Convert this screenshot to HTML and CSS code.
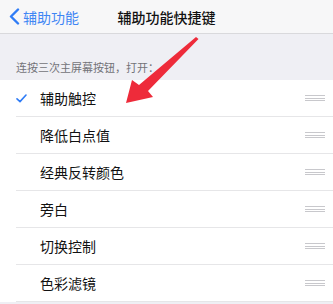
FILE: index.html
```html
<!DOCTYPE html>
<html>
<head>
  <meta charset="utf-8">
  <title>辅助功能快捷键</title>
  <link rel="stylesheet" href="styles.css">
</head>
<body>
  <div class="nav">
    <a class="back" href="#">
      <svg width="12" height="17" viewBox="0 0 12 17"><path d="M10 1.5 L3 8.5 L10 15.5" fill="none" stroke="#2f7cf6" stroke-width="2.4" stroke-linecap="round" stroke-linejoin="round"/></svg>
      辅助功能
    </a>
    <div class="title">辅助功能快捷键</div>
    <div></div>
  </div>

  <div class="section-head">连按三次主屏幕按钮，打开：</div>

  <div class="list">
    <div class="row">
      <span class="check">
        <svg width="11" height="9" viewBox="0 0 11 9"><path d="M1 4.8 L4 7.6 L10 1" fill="none" stroke="#2f7cf6" stroke-width="1.6" stroke-linecap="round" stroke-linejoin="round"/></svg>
      </span>
      <span class="label">辅助触控</span>
      <span class="grip"><i></i><i></i><i></i></span>
    </div>
    <div class="row">
      <span class="check"></span>
      <span class="label">降低白点值</span>
      <span class="grip"><i></i><i></i><i></i></span>
    </div>
    <div class="row">
      <span class="check"></span>
      <span class="label">经典反转颜色</span>
      <span class="grip"><i></i><i></i><i></i></span>
    </div>
    <div class="row">
      <span class="check"></span>
      <span class="label">旁白</span>
      <span class="grip"><i></i><i></i><i></i></span>
    </div>
    <div class="row">
      <span class="check"></span>
      <span class="label">切换控制</span>
      <span class="grip"><i></i><i></i><i></i></span>
    </div>
    <div class="row">
      <span class="check"></span>
      <span class="label">色彩滤镜</span>
      <span class="grip"><i></i><i></i><i></i></span>
    </div>
  </div>

  <!-- red annotation arrow drawn over the screenshot -->
  <svg class="arrow" width="333" height="304" viewBox="0 0 333 304">
    <path d="M196 37 L198.5 39 L148 91 L153 97 L126 103 L132 80 L139 85 Z" fill="#ee2b3a"/>
  </svg>
</body>
</html>
```

FILE: styles.css
```css
body {
  margin: 0;
  background-color: #efeff4;
  font-family: "Noto Sans CJK SC", "Noto Sans", sans-serif;
  color: #111;
  position: relative;
  width: 333px;
  height: 304px;
  overflow: hidden;
}
.nav {
  height: 33px;
  background-color: #f7f7f8;
  border-bottom: 1px solid #d9d9dc;
  display: grid;
  grid-template-columns: 1fr auto 1fr;
  align-items: center;
}
.back {
  display: flex;
  align-items: center;
  gap: 3px;
  padding-left: 8px;
  color: #3f86f4;
  font-size: 14px;
  text-decoration: none;
}
.title {
  font-size: 14px;
  font-weight: 500;
  color: #111;
}
.section-head {
  height: 46px;
  box-sizing: border-box;
  padding: 0 16px 5px;
  display: flex;
  align-items: flex-end;
  font-size: 11px;
  color: #737378;
}
.list {
  background-color: #fff;
}
.row {
  height: 37px;
  display: flex;
  align-items: center;
  margin-left: 16px;
  padding-right: 8px;
  border-bottom: 1px solid #e6e6e8;
  box-sizing: border-box;
}
.check {
  width: 24px;
  display: flex;
  align-items: center;
}
.label {
  flex: 1;
  font-size: 14px;
}
.grip {
  width: 20px;
  display: flex;
  flex-direction: column;
  gap: 1.5px;
}
.grip i {
  display: block;
  height: 1px;
  background-color: #c8c8cc;
}
.arrow {
  position: absolute;
  left: 0;
  top: 0;
}
```
